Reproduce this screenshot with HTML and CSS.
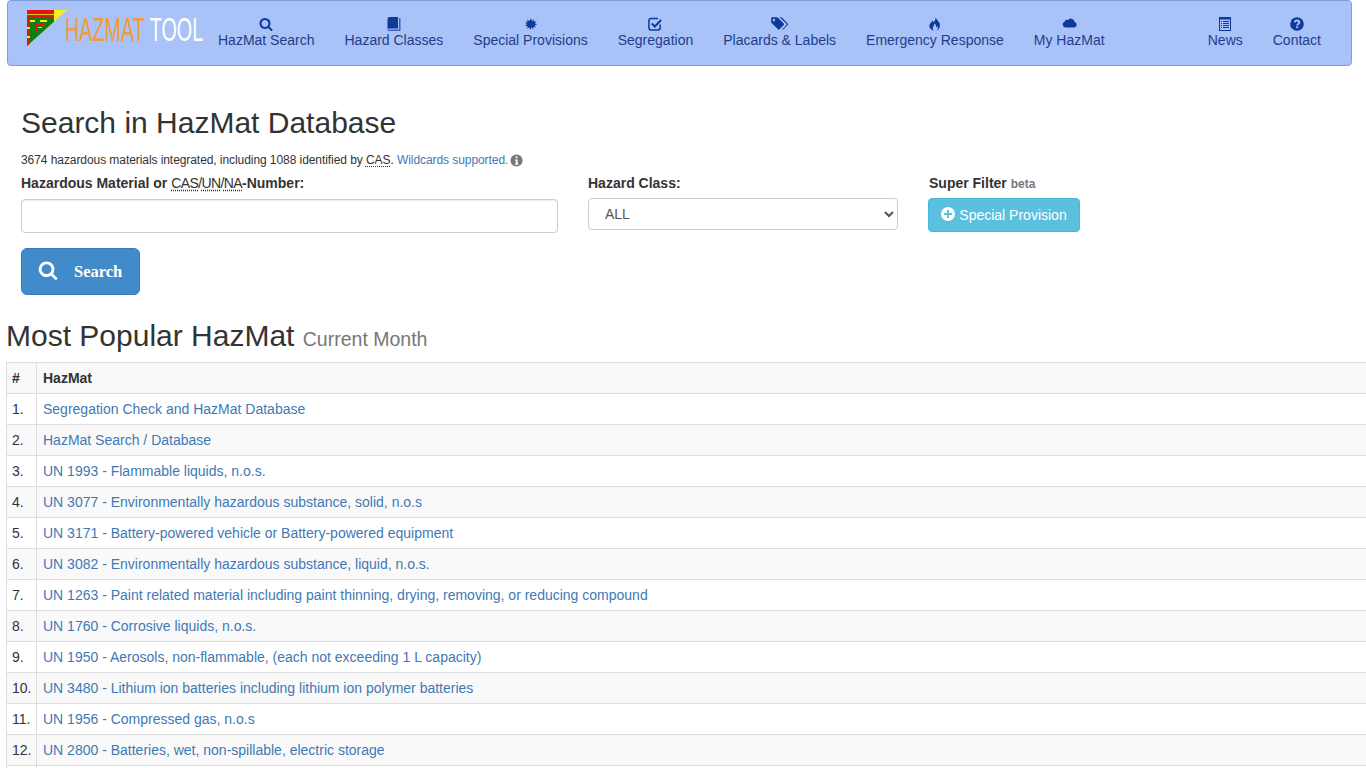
FILE: index.html
```html
<!DOCTYPE html>
<html lang="en">
<head>
<meta charset="utf-8">
<title>HazMat Tool</title>
<link rel="stylesheet" href="styles.css">
</head>
<body>
<nav class="navbar">
  <a class="brand" href="#">
    <svg class="logo" viewBox="0 0 42 37" width="42" height="37">
      <defs><clipPath id="tri"><polygon points="1,1 41,1 1,37"/></clipPath></defs>
      <g clip-path="url(#tri)">
        <rect width="42" height="37" fill="#f5ee1e"/>
        <rect x="1" y="1" width="27" height="36" fill="#0f7d12"/>
        <rect x="1" y="1" width="27" height="4" fill="#e2140f"/>
        <rect x="1" y="5" width="27" height="1" fill="#d9c81a"/>
        <rect x="1" y="6" width="27" height="3" fill="#e2140f"/>
        <rect x="4" y="11" width="5" height="2" fill="#f5ee1e"/>
        <rect x="14" y="11" width="7" height="2" fill="#f5ee1e"/>
        <rect x="1" y="11" width="3" height="26" fill="#e2140f"/>
        <rect x="1" y="18" width="3" height="2" fill="#f5ee1e"/>
        <rect x="1" y="27" width="3" height="2" fill="#f5ee1e"/>
        <rect x="9" y="15" width="11" height="2" fill="#e2140f"/>
        <rect x="9" y="17" width="2" height="6" fill="#e2140f"/>
        <rect x="12" y="18" width="4" height="1" fill="#f5ee1e"/>
      </g>
    </svg>
    <span class="brand-text"><span class="brand-a">HAZMAT</span> <span class="brand-b">TOOL</span></span>
  </a>
  <ul class="nav-list">
    <li><a href="#"><svg class="ico" viewBox="0 0 1792 1792"><path d="M1216 832q0-185-131.500-316.500t-316.500-131.500-316.500 131.500-131.500 316.500 131.500 316.500 316.500 131.500 316.500-131.500 131.500-316.500zm512 832q0 52-38 90t-90 38q-54 0-90-38l-343-342q-179 124-399 124-143 0-273.500-55.500t-225-150-150-225-55.500-273.500 55.500-273.500 150-225 225-150 273.500-55.500 273.500 55.500 225 150 150 225 55.500 273.500q0 220-124 399l343 343q37 37 37 90z"/></svg>HazMat Search</a></li>
    <li><a href="#"><svg class="ico" viewBox="0 0 14 14"><path d="M.5 2C.5.800 1.300 0 2.500 0H11v11.500H2.500q-2 0-2 1z"/><path d="M12 1h1.500V14H2.500q-1.600 0-2-1.500h11.500z" opacity=".7"/></svg>Hazard Classes</a></li>
    <li><a href="#"><svg class="ico" viewBox="-1.500 -1.500 17 17"><polygon points="7,0 8.300,3.600 10.700,.9 10.500,4.400 14,3.800 11.600,6.200 14.500,7.500 11.200,8.400 13.200,11.200 10,10.200 9.800,13.800 7.600,11 6,14.200 5,10.800 2.300,12.800 3,9.400 -.3,9.800 2,7.300 -.3,5 3,5 1.900,1.800 5,3.500"/></svg>Special Provisions</a></li>
    <li><a href="#"><svg class="ico" viewBox="0 0 14 14"><path class="outline" d="M12.200 7.500v3.300q0 2.200-2.200 2.200H3Q.9 13 .9 10.800V3.700q0-2.200 2.100-2.200h7"/><path class="outline thick" d="M3.800 6.500l3 3 6.300-6.500"/></svg>Segregation</a></li>
    <li><a href="#"><svg class="ico tag" viewBox="0 0 19 15"><path d="M0 1.500Q0 .3 1.200.3H6q.7 0 1.300.6L13.500 7q.8.900 0 1.700L9 13.200q-.9.800-1.700 0L.8 6.800Q0 6 0 5.300zM3 2a1.300 1.300 0 1 0 .01 0z" fill-rule="evenodd"/><path d="M9 .3h1.500q.7 0 1.300.6L17.800 7q.8.900 0 1.700l-4.600 4.500q-.7.700-1.500.2L16.400 8.500q.6-.6 0-1.200z"/></svg>Placards &amp; Labels</a></li>
    <li><a href="#"><svg class="ico" viewBox="0 0 14 14"><path d="M7.500 0c.5 2.500 3.500 4 4.300 6.800.7 2.800-.6 5.800-3.300 7 1.500-1.500 1.700-3.400.8-5-.2 1-.8 1.500-1.300 1.700.4-1.700-.3-3.400-1.700-4.300.2 1.700-.8 2.600-1.300 3.700-.5 1.200-.1 2.800 1 3.900C3.500 13.200 1.300 11.200 1.300 9c0-2.500 2.400-3.500 2.900-5.600.6.400 1 1 1 1.800C6.800 4 8 2.500 7.500 0z"/></svg>Emergency Response</a></li>
    <li><a href="#"><svg class="ico cloud" viewBox="0 1 15 12"><path d="M3.500 10.500A3 3 0 0 1 2.600 4.700 2.500 2.500 0 0 1 5.800 3 3.800 3.800 0 0 1 12.600 5a2.800 2.800 0 0 1-.6 5.500z"/></svg>My HazMat</a></li>
  </ul>
  <ul class="nav-list nav-right">
    <li><a href="#"><svg class="ico" viewBox="0 0 14 14"><path fill-rule="evenodd" d="M1 0h12v14H1zM2 2.500V13h10V2.500z"/><path d="M3 4h1v1H3zM5 4h6v1H5zM3 6h1v1H3zM5 6h6v1H5zM3 8h1v1H3zM5 8h6v1H5zM3 10h1v1H3zM5 10h6v1H5z"/></svg>News</a></li>
    <li><a href="#"><svg class="ico" viewBox="0 0 14 14"><circle cx="7" cy="7" r="6.800"/><path class="hole" d="M4.800 5.300C5 3.900 6 3.500 7 3.500c1.300 0 2.300.7 2.300 1.900 0 1.600-2 1.600-2 3"/><rect class="hole-fill" x="6.200" y="9.300" width="2" height="1.800"/></svg>Contact</a></li>
  </ul>
</nav>

<main>
  <section class="search">
    <h1>Search in HazMat Database</h1>
    <p class="intro">3674 hazardous materials integrated, including 1088 identified by <abbr>CAS</abbr>. <a href="#">Wildcards supported.</a> <svg class="info" viewBox="0 0 14 14"><circle cx="7" cy="7" r="6.500"/><rect class="on-dark" x="6" y="2.500" width="2" height="2"/><path class="on-dark" d="M5.500 6h2.700v4.200h.8v1.300H5.300v-1.300h1V7.300h-.8z"/></svg></p>
    <form class="form-row">
      <div class="col-a">
        <label>Hazardous Material or <span class="ids"><abbr>CAS</abbr><span class="slash">/</span><abbr>UN</abbr><span class="slash">/</span><abbr>NA</abbr></span>-Number:</label>
        <input class="text-input" type="text">
      </div>
      <div class="col-b">
        <label>Hazard Class:</label>
        <select class="select-input"><option>ALL</option></select>
      </div>
      <div class="col-c">
        <label class="label-shift">Super Filter <small>beta</small></label>
        <button class="btn-info" type="button"><svg class="plus" viewBox="0 0 14 14"><circle cx="7" cy="7" r="7"/><path class="plus-mark" d="M6 3h2v3h3v2H8v3H6V8H3V6h3z"/></svg>Special Provision</button>
      </div>
    </form>
    <button class="btn-search" type="button"><svg class="btn-ico" viewBox="0 0 1792 1792"><path d="M1216 832q0-185-131.500-316.500t-316.500-131.500-316.500 131.500-131.500 316.500 131.500 316.500 316.500 131.500 316.500-131.500 131.500-316.500zm512 832q0 52-38 90t-90 38q-54 0-90-38l-343-342q-179 124-399 124-143 0-273.500-55.500t-225-150-150-225-55.500-273.500 55.500-273.500 150-225 225-150 273.500-55.500 273.500 55.500 225 150 150 225 55.500 273.500q0 220-124 399l343 343q37 37 37 90z"/></svg>Search</button>
  </section>

  <section class="popular">
    <h2>Most Popular HazMat <small>Current Month</small></h2>
    <table class="table">
      <thead><tr><th class="num">#</th><th>HazMat</th></tr></thead>
      <tbody>
        <tr><td class="num">1.</td><td><a href="#">Segregation Check and HazMat Database</a></td></tr>
        <tr><td class="num">2.</td><td><a href="#">HazMat Search / Database</a></td></tr>
        <tr><td class="num">3.</td><td><a href="#">UN 1993 - Flammable liquids, n.o.s.</a></td></tr>
        <tr><td class="num">4.</td><td><a href="#">UN 3077 - Environmentally hazardous substance, solid, n.o.s</a></td></tr>
        <tr><td class="num">5.</td><td><a href="#">UN 3171 - Battery-powered vehicle or Battery-powered equipment</a></td></tr>
        <tr><td class="num">6.</td><td><a href="#">UN 3082 - Environmentally hazardous substance, liquid, n.o.s.</a></td></tr>
        <tr><td class="num">7.</td><td><a href="#">UN 1263 - Paint related material including paint thinning, drying, removing, or reducing compound</a></td></tr>
        <tr><td class="num">8.</td><td><a href="#">UN 1760 - Corrosive liquids, n.o.s.</a></td></tr>
        <tr><td class="num">9.</td><td><a href="#">UN 1950 - Aerosols, non-flammable, (each not exceeding 1 L capacity)</a></td></tr>
        <tr><td class="num">10.</td><td><a href="#">UN 3480 - Lithium ion batteries including lithium ion polymer batteries</a></td></tr>
        <tr><td class="num">11.</td><td><a href="#">UN 1956 - Compressed gas, n.o.s</a></td></tr>
        <tr><td class="num">12.</td><td><a href="#">UN 2800 - Batteries, wet, non-spillable, electric storage</a></td></tr>
        <tr><td class="num">&nbsp;</td><td>&nbsp;</td></tr>
      </tbody>
    </table>
  </section>
</main>
</body>
</html>
```

FILE: styles.css
```css
* { box-sizing: border-box; }
html, body { height: 768px; overflow: hidden; }
body {
  margin: 0;
  font-family: "Liberation Sans", Arial, sans-serif;
  font-size: 14px;
  line-height: 20px;
  color: #333;
  background: #fff;
}
a { color: #3f79b5; text-decoration: none; }
abbr { text-decoration: underline dotted; text-underline-offset: 2px; }

.navbar {
  display: flex;
  justify-content: space-between;
  height: 66px;
  margin: 0 14px 0 7px;
  background: #a9c3f8;
  border: 1px solid #7f9fdc;
  border-radius: 4px;
}
.brand {
  display: flex;
  align-items: flex-start;
  width: 195px;
  flex: none;
  padding: 8px 0 0 18px;
}
.logo { flex: none; }
.brand-text {
  display: inline-block;
  flex: none;
  margin: 1px 0 0 -3px;
  font-size: 33px;
  line-height: 40px;
  white-space: nowrap;
  transform: scaleX(.6);
  transform-origin: left center;
}
.brand-a { color: #f09a3a; }
.brand-b { color: #fff; }

.nav-list {
  display: flex;
  flex: none;
  margin: 0 auto 0 0;
  padding: 0;
  list-style: none;
}
.nav-list a {
  display: flex;
  flex-direction: column;
  align-items: center;
  padding: 16px 15px 0;
  color: #1f3d8c;
  white-space: nowrap;
  line-height: 20px;
}
.nav-right { margin-right: 15px; margin-left: 0; }
.ico { display: block; width: 14px; height: 14px; fill: #0e3a9c; margin-bottom: -1px; }
.ico.tag { width: 18px; }
.ico.cloud { width: 15px; }
.outline { fill: none; stroke: #0e3a9c; stroke-width: 1.500; }
.outline.thick { stroke-width: 2; }
.hole { fill: none; stroke: #a9c3f8; stroke-width: 2; }
.hole-fill { fill: #a9c3f8; }

main { display: block; }
.search { padding: 0 0 0 21px; }
h1 {
  margin: 40px 0 0;
  font-size: 30px;
  font-weight: 400;
  line-height: 33px;
}
.intro {
  margin: 11px 0 0;
  font-size: 12px;
  line-height: 20px;
  letter-spacing: -.07px;
}
.info { width: 13px; height: 13px; fill: #777; vertical-align: -3px; margin-left: -2px; }
.on-dark { fill: #fff; }
.form-row {
  display: grid;
  grid-template-columns: 537px 310px 152px;
  column-gap: 30px;
}
label {
  display: block;
  height: 20px;
  margin: 3px 0 6px;
  font-weight: 700;
  line-height: 20px;
}
label abbr, .slash { font-weight: 400; }
.ids { letter-spacing: -.6px; }
label small { font-size: 12px; color: #777; }
.label-shift { padding-left: 1px; }
.col-b label, .col-c label { margin-bottom: 5px; }
.text-input {
  display: block;
  width: 537px;
  height: 34px;
  border: 1px solid #ccc;
  border-radius: 4px;
  background: #fff;
  box-shadow: inset 0 1px 1px rgba(0,0,0,.075);
}
.select-input {
  display: block;
  width: 310px;
  height: 32px;
  padding: 0 12px;
  border: 1px solid #ccc;
  border-radius: 4px;
  background: #fff;
  color: #555;
  font: 14px "Liberation Sans", Arial, sans-serif;
}
.btn-info {
  display: flex;
  align-items: center;
  justify-content: center;
  width: 152px;
  height: 34px;
  padding: 0;
  border: 1px solid #46b8da;
  border-radius: 4px;
  background: #5bc0de;
  color: #fff;
  font: 14px "Liberation Sans", Arial, sans-serif;
}
.plus { width: 14px; height: 14px; fill: #fff; margin-right: 4px; margin-top: -2px; }
.plus-mark { fill: #5bc0de; }
.btn-search {
  display: flex;
  align-items: center;
  width: 119px;
  height: 47px;
  margin-top: 15px;
  padding: 0 0 0 16px;
  border: 1px solid #357ebd;
  border-radius: 6px;
  background: #428bca;
  color: #fff;
  font: 700 16.500px "Liberation Serif", "Times New Roman", serif;
}
.btn-ico { width: 20px; height: 20px; fill: #fff; margin-right: 16px; margin-top: -4px; }

.popular { padding-left: 6px; }
h2 {
  margin: 24px 0 6px;
  font-size: 30px;
  font-weight: 400;
  line-height: 33px;
}
h2 small { font-size: 19.500px; color: #777; }
.table {
  width: 1400px;
  border-collapse: collapse;
  table-layout: fixed;
}
.table th, .table td {
  height: 31px;
  padding: 5px 6px;
  border: 1px solid #ddd;
  text-align: left;
  line-height: 20px;
  vertical-align: top;
}
.table .num { width: 30px; padding-left: 5px; padding-right: 0; }
.table thead tr { background: #f9f9f9; }
.table tbody tr:nth-child(even) { background: #f9f9f9; }
```
